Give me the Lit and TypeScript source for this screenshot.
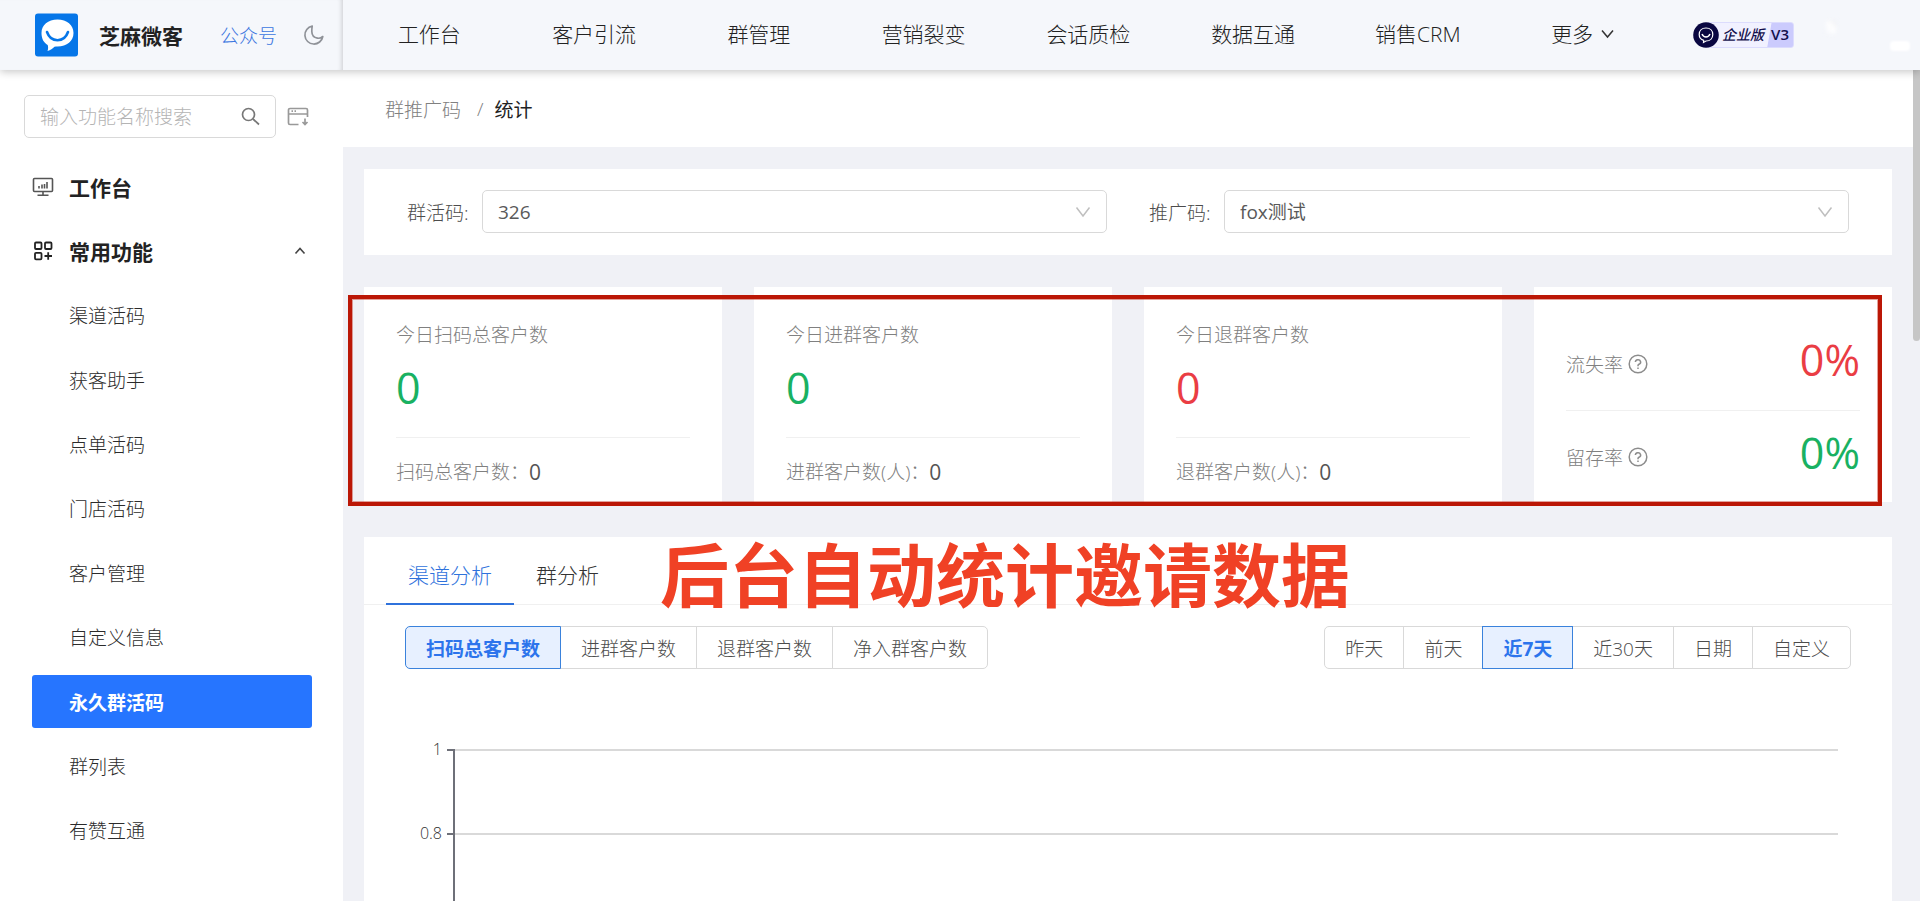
import { LitElement, html, css, svg } from "lit";
import { customElement, state } from "lit/decorators.js";
import { classMap } from "lit/directives/class-map.js";

const NAV = ["工作台", "客户引流", "群管理", "营销裂变", "会话质检", "数据互通", "销售CRM"];
const MENU = ["渠道活码", "获客助手", "点单活码", "门店活码", "客户管理", "自定义信息", "永久群活码", "群列表", "有赞互通"];
const STATS = [
  { title: "今日扫码总客户数", value: "0", tone: "up", label: "扫码总客户数：", total: "0" },
  { title: "今日进群客户数", value: "0", tone: "up", label: "进群客户数(人)：", total: "0" },
  { title: "今日退群客户数", value: "0", tone: "down", label: "退群客户数(人)：", total: "0" },
];
const RATES = [
  { label: "流失率", value: "0%", tone: "down" },
  { label: "留存率", value: "0%", tone: "up" },
];
const METRICS = ["扫码总客户数", "进群客户数", "退群客户数", "净入群客户数"];
const RANGES = ["昨天", "前天", "近7天", "近30天", "日期", "自定义"];
const TICKS = ["1", "0.8"];

const base = css`
  * { box-sizing: border-box; }
  a { color: inherit; text-decoration: none; }
  ul { list-style: none; margin: 0; padding: 0; }
  button, input, select { font: inherit; color: inherit; margin: 0; }
  svg { display: block; flex: none; }
`;

const help = svg`<svg width="20" height="20" viewBox="0 0 20 20" fill="none" stroke="#8c8c8c" stroke-width="1.5">
  <circle cx="10" cy="10" r="8.8"/><path d="M7.4 8.1a2.6 2.4 0 1 1 3.6 2.2c-.7.3-1 .7-1 1.5v.4"/><path d="M10 13.6v1.5"/></svg>`;

@customElement("top-bar")
class TopBar extends LitElement {
  static styles = [base, css`
    :host { display: flex; height: 70px; color: #222; font-size: 21px; position: relative; z-index: 2; background: #f5f7fb; box-shadow: 0 2px 8px rgba(0, 0, 0, .22); }
    .brand { width: 343px; display: flex; align-items: center; padding: 0 19px 0 35px; box-shadow: inset -5px 0 5px -4px rgba(0, 0, 0, .18); }
    .name { font-weight: 700; margin-left: 20px; }
    .account { font-size: 19px; color: #3b76e0; margin-left: 37px; flex: 1; }
    .moon { border: 0; padding: 0; background: none; }
    .links { flex: 1; display: grid; grid-template-columns: repeat(8, 1fr); padding-left: 4px; align-items: center; text-align: center; line-height: 28px; padding-bottom: 2px; }
    .more { display: flex; gap: 8px; align-items: center; justify-content: center; }
    .side { width: 255px; display: flex; align-items: center; padding-left: 28px; position: relative; }
    .badge { display: flex; align-items: center; height: 26px; width: 101px; }
    .badge svg { margin-right: -13px; position: relative; }
    .edition { flex: 1; height: 26px; display: flex; border: 1px solid #dcdcfd; border-radius: 3px; overflow: hidden; background: linear-gradient(100deg, #f1f1ff 71%, #cbcbfd 72%); color: #14104d; font-size: 14px; line-height: 23px; font-weight: 500; padding: 0 4px 0 15px; justify-content: space-between; }
    .tier { font-style: italic; }
    .level { font-size: 15px; font-weight: 600; }
    .glow { position: absolute; right: 10px; top: 41px; width: 20px; height: 10px; border-radius: 4px; background: #fff; filter: blur(1px); }
    .glint { position: absolute; right: 84px; top: 21px; width: 10px; height: 13px; background: linear-gradient(45deg, #f5f7fb, #fff 55%, #ececee); filter: blur(2px); }
  `];
  render() {
    return html`
      <div class="brand">
        <svg width="44" height="44" viewBox="0 0 44 44"><rect width="43" height="43" y=".5" rx="3" fill="#0676e8"/>
          <path d="M22.500 6.500c9.500 0 16 5.500 16 13.500s-6.500 13.500-16 13.500c-1 0-2 0-3 .3-1.800 1.400-4 3.600-7 4.200.8-2 .8-4 .2-6C8.500 29.500 6.500 25.500 6.500 20c0-8 6.500-13.500 16-13.500z" fill="#fff"/>
          <path d="M12 19c2 5.700 5.500 8.200 10.500 8.200S31 24.700 33 19" fill="none" stroke="#0676e8" stroke-width="2.600" stroke-linecap="round"/></svg>
        <span class="name">芝麻微客</span>
        <a class="account" href="#">公众号</a>
        <button class="moon" aria-label="深色模式"><svg width="21" height="22" viewBox="0 0 21 22" fill="none" stroke="#8f9298" stroke-width="1.700" stroke-linejoin="round"><path d="M9.200 2.200a9 9 0 1 0 10.600 10.300c-1.600 1.400-3.500 2-5.400 1.600a7 7 0 0 1-5.600-6.700c0-2 .1-3.600.4-5.200z"/></svg></button>
      </div>
      <nav class="links">
        ${NAV.map((n) => html`<a href="#">${n}</a>`)}
        <a class="more" href="#">更多<svg width="13" height="10" viewBox="0 0 13 10" fill="none" stroke="#333" stroke-width="1.500"><path d="M1 1.500l5.500 6.500L12 1.500"/></svg></a>
      </nav>
      <div class="side">
        <span class="badge">
          <svg width="26" height="30" viewBox="0 0 26 30"><circle cx="13" cy="15" r="12.800" fill="#0a0741"/><path d="M13 8c4.300 0 6.800 2.700 6.800 6.400S17.300 21 13 21l-2.500 1.400.2-2C8 19.500 6.200 17.400 6.200 14.400 6.200 10.700 8.700 8 13 8z" fill="none" stroke="#fff" stroke-width="1.200"/><path d="M9 14c1 2.300 2.300 3 4 3s3-.7 4-3" fill="none" stroke="#fff" stroke-width="1.500"/></svg>
          <span class="edition"><span class="tier">企业版</span><span class="level">V3</span></span>
        </span>
        <span class="glint"></span><span class="glow"></span>
      </div>`;
  }
}

@customElement("side-menu")
class SideMenu extends LitElement {
  @state() private active = "永久群活码";
  static styles = [base, css`
    :host { display: block; width: 343px; flex: none; padding: 25px 31px 0 24px; font-size: 19px; color: #2b2b2b; background: #fff; }
    .find { display: flex; align-items: center; gap: 11px; }
    .box { width: 252px; height: 43px; border: 1px solid #d9d9d9; border-radius: 5px; display: flex; align-items: center; padding: 0 15px; }
    .box input { flex: 1; min-width: 0; border: 0; outline: 0; padding: 0; background: none; }
    .box input::placeholder { color: #b4b4b4; }
    .tool { border: 0; background: none; padding: 0; }
    .menu { display: flex; flex-direction: column; justify-content: space-between; min-height: 697px; margin-top: 22px; padding-left: 8px; }
    .row { height: 53px; display: flex; align-items: center; border-radius: 3px; padding-left: 37px; }
    .head { font-size: 21px; font-weight: 700; color: #222; padding: 0 6px 0 0; gap: 15px; }
    .head span { flex: 1; }
    .on { background: #2675ff; color: #fff; font-weight: 700; }
  `];
  render() {
    return html`
      <div class="find">
        <label class="box"><input aria-label="搜索功能" placeholder="输入功能名称搜索" />
          <svg width="19" height="19" viewBox="0 0 19 19" fill="none" stroke="#777" stroke-width="1.700"><circle cx="7.500" cy="7.500" r="6"/><path d="M12 12l6 5.500"/></svg></label>
        <button class="tool" aria-label="收起菜单"><svg width="22" height="20" viewBox="0 0 22 20" fill="none" stroke="#999" stroke-width="1.700"><path d="M11.500 17.500H3a1.500 1.500 0 0 1-1.500-1.500V3A1.500 1.500 0 0 1 3 1.500h16A1.500 1.500 0 0 1 20.500 3v7M1.500 7h19M4.500 4.200h1.500M7.500 4.200H9M18 11.500v6M15.500 15l2.500 2.500 2.500-2.500"/></svg></button>
      </div>
      <ul class="menu">
        <li><a class="row head" href="#"><svg width="22" height="20" viewBox="0 0 22 20" fill="none" stroke="#555" stroke-width="1.600"><rect x="1.500" y="1.500" width="19" height="13" rx="1"/><path d="M11 14.500v3.500M5.500 18.300h11M7 11.500V9M10 11.500V7.500M12.500 11.500V7M15 11.500V5"/></svg><span>工作台</span></a></li>
        <li><a class="row head" href="#"><svg width="22" height="20" viewBox="0 0 22 20" fill="none" stroke="#222" stroke-width="1.800"><rect x="3" y="1.500" width="6.500" height="6.500" rx="1"/><rect x="13" y="1.500" width="6.500" height="6.500" rx="1"/><rect x="3" y="11.800" width="6.500" height="6.500" rx="1"/><path d="M16.200 11.200v7.500M12.500 15h7.500"/></svg><span>常用功能</span><svg width="12" height="9" viewBox="0 0 12 9" fill="none" stroke="#444" stroke-width="1.600"><path d="M1.500 7.500L6 2.500l4.500 5"/></svg></a></li>
        ${MENU.map((m) => html`<li><a href="#" class=${classMap({ row: true, on: m === this.active })}
          @click=${(e: Event) => { e.preventDefault(); this.active = m; }}>${m}</a></li>`)}
      </ul>`;
  }
}

@customElement("stat-cards")
class StatCards extends LitElement {
  static styles = [base, css`
    :host { display: grid; grid-template-columns: repeat(4, 1fr); gap: 32px; font-size: 19px; color: #808080; position: relative; }
    .card { background: #fff; height: 215px; padding: 33px 32px 0; display: flex; flex-direction: column; }
    .title { line-height: 30px; }
    .big { font-size: 43px; line-height: 60px; font-weight: 400; }
    .title + .big { margin-top: 8px; }
    .up { color: #19b162; }
    .down { color: #ea3d44; }
    .sum { border-top: 1px solid #f0f0f0; margin-top: 19px; padding-top: 19px; line-height: 30px; display: flex; }
    .sum b { font-size: 21px; font-weight: 400; color: #555; }
    .rates { padding-top: 31px; }
    .rate { height: 92px; display: flex; align-items: center; gap: 5px; }
    .rate + .rate { border-top: 1px solid #f0f0f0; }
    .rate .big { margin-left: auto; padding-bottom: 8px; }
    .frame { position: absolute; inset: 8px 10px -4px -16px; border: 4px solid #bb1706; box-shadow: inset 0 0 0 1px rgba(187, 23, 6, .4); pointer-events: none; }
  `];
  render() {
    return html`
      ${STATS.map((s) => html`<section class="card">
        <div class="title">${s.title}</div>
        <div class="big ${s.tone}">${s.value}</div>
        <div class="sum">${s.label}<b>${s.total}</b></div>
      </section>`)}
      <section class="card rates">
        ${RATES.map((r) => html`<div class="rate"><span>${r.label}</span>${help}<span class="big ${r.tone}">${r.value}</span></div>`)}
      </section>
      <div class="frame"></div>`;
  }
}

@customElement("button-group")
class ButtonGroup extends LitElement {
  static properties = { items: { attribute: false }, value: {} };
  declare items: string[];
  declare value: string;
  static styles = [base, css`
    :host { display: flex; font-size: 19px; color: #4c4c4c; }
    button { height: 43px; padding: 0 20px; border: 1px solid #d9d9d9; background: #fff; margin-right: -1px; white-space: nowrap; }
    button:first-child { border-radius: 5px 0 0 5px; }
    button:last-child { border-radius: 0 5px 5px 0; margin-right: 0; }
    .on { background: #e7f0ff; border-color: #3a82dc; color: #2c74ec; font-weight: 700; position: relative; }
  `];
  render() {
    return html`${this.items.map((i) => html`<button class=${classMap({ on: i === this.value })}
      @click=${() => { this.value = i; }}>${i}</button>`)}`;
  }
}

@customElement("analysis-panel")
class AnalysisPanel extends LitElement {
  static styles = [base, css`
    :host { display: block; background: #fff; position: relative; color: #333; }
    .tabs { display: flex; padding-left: 22px; height: 68px; border-bottom: 1px solid #f0f0f0; font-size: 21px; }
    .tabs button { border: 0; background: none; padding: 0 22px; margin-bottom: -1px; border-bottom: 2px solid transparent; padding-top: 8px; }
    .tabs .on { color: #2f72dc; border-color: #2f72dc; }
    .caption { position: absolute; left: 296px; top: 0; font-size: 69px; line-height: 76px; font-weight: 700; color: #f04125; white-space: nowrap; }
    .bar { display: flex; justify-content: space-between; padding: 21px 41px 0; }
    .chart { padding: 80px 54px 0 48px; font-size: 16px; line-height: 20px; }
    .level { display: flex; height: 84px; }
    .level span { width: 30px; text-align: right; margin-top: -10px; }
    .plot { flex: 1; margin-left: 11px; border-left: 2px solid #6e7079; border-top: 2px solid #d9d9d9; position: relative; }
    .plot::before { content: ""; position: absolute; right: 100%; top: -2px; width: 8px; height: 2px; background: #6e7079; }
  `];
  render() {
    return html`
      <div class="tabs"><button class="on">渠道分析</button><button>群分析</button></div>
      <div class="caption">后台自动统计邀请数据</div>
      <div class="bar">
        <button-group .items=${METRICS} .value=${"扫码总客户数"}></button-group>
        <button-group .items=${RANGES} .value=${"近7天"}></button-group>
      </div>
      <div class="chart">${TICKS.map((t) => html`<div class="level"><span>${t}</span><div class="plot"></div></div>`)}</div>`;
  }
}

@customElement("app-root")
class AppRoot extends LitElement {
  static styles = [base, css`
    :host { display: flex; flex-direction: column; height: 100vh; overflow: hidden; font-family: "Open Sans", "Noto Sans CJK SC", sans-serif; font-weight: 300; background: #fff; }
    .body { flex: 1; min-height: 0; display: flex; }
    .page { flex: 1; min-width: 0; background: #f0f1f6; position: relative; overflow: hidden; font-size: 19px; }
    .crumbs { height: 77px; background: #fff; padding-left: 42px; display: flex; align-items: center; color: #808080; }
    .crumbs i { font-style: normal; padding: 0 11px 0 16px; }
    .crumbs b { color: #222; font-weight: 400; }
    .content { padding: 22px 28px 0 21px; display: flex; flex-direction: column; }
    .filters { background: #fff; padding: 21px 43px 22px; display: grid; grid-template-columns: 1fr 1fr; gap: 42px; color: #4c4c4c; margin-bottom: 32px; }
    .filters label { display: flex; align-items: center; }
    .filters span { width: 75px; white-space: nowrap; }
    .pick { flex: 1; position: relative; display: flex; align-items: center; }
    .pick select { appearance: none; width: 100%; height: 43px; border: 1px solid #d9d9d9; border-radius: 5px; background: #fff; padding: 0 15px; font-weight: 400; color: #595959; }
    .pick svg { position: absolute; right: 16px; pointer-events: none; }
    stat-cards { margin-bottom: 35px; }
    .thumb { position: absolute; right: 0; top: 0; width: 7px; height: 271px; background: #c6c6c6; border-radius: 0 0 4px 4px; }
  `];
  private field(label: string, value: string) {
    return html`<label><span>${label}</span><div class="pick"><select><option>${value}</option></select>
      <svg width="16" height="12" viewBox="0 0 16 12" fill="none" stroke="#bfbfbf" stroke-width="1.500"><path d="M1.500 1.500L8 10l6.500-8.500"/></svg></div></label>`;
  }
  render() {
    return html`
      <top-bar></top-bar>
      <div class="body">
        <side-menu></side-menu>
        <main class="page">
          <div class="crumbs"><a href="#">群推广码</a><i>/</i><b>统计</b></div>
          <div class="content">
            <div class="filters">${this.field("群活码:", "326")}${this.field("推广码:", "fox测试")}</div>
            <stat-cards></stat-cards>
            <analysis-panel></analysis-panel>
          </div>
          <div class="thumb"></div>
        </main>
      </div>`;
  }
}
